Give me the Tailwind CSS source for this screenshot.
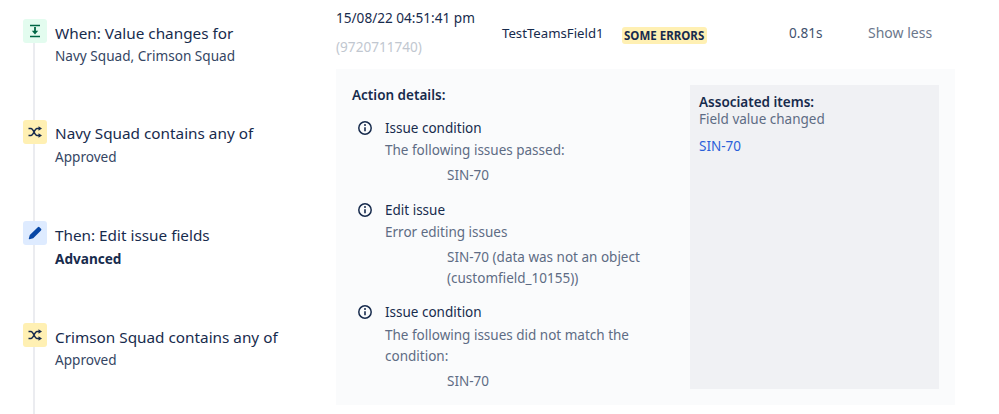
<!DOCTYPE html>
<html lang="en">
<head>
  <meta charset="UTF-8" />
  <title>Audit log</title>
  <script src="https://cdn.jsdelivr.net/npm/@tailwindcss/browser@4"></script>
</head>
<body class="bg-white h-[414px] overflow-hidden font-['Noto_Sans',sans-serif] text-[#172B4D]">
  <div class="flex h-[414px]">
    <!-- rule steps -->
    <div class="w-[336px] shrink-0 pl-[23px] pt-[19px] flex flex-col">
      <div class="flex h-[101px] gap-2">
        <div class="w-6 flex flex-col">
          <div class="w-6 h-6 rounded-[3px] bg-[#E3FCEF] flex items-center justify-center">
            <svg width="16" height="16" viewBox="0 0 16 16" fill="none"><path d="M3 2.5h10M3 13.5h10" stroke="#006644" stroke-width="1.7"/><path d="M8 4v5" stroke="#006644" stroke-width="1.8"/><path d="M4.8 7.8h6.4L8 11.6z" fill="#006644"/></svg>
          </div>
          <div class="ml-[10px] w-0.5 flex-1 bg-[#EBECF0]"></div>
        </div>
        <div class="pt-[2px]">
          <div class="text-[15.3px] leading-6">When: Value changes for</div>
          <div class="text-[13.6px] leading-[20px] mt-[1px] text-[#344563]">Navy Squad, Crimson Squad</div>
        </div>
      </div>
      <div class="flex h-[101px] gap-2">
        <div class="w-6 flex flex-col">
          <div class="w-6 h-6 rounded-[3px] bg-[#FFF0B3] flex items-center justify-center">
            <svg width="16" height="16" viewBox="0 0 16 16" fill="none" stroke="#172B4D" stroke-width="1.5"><path d="M1.5 4.5h2.5c2.5 0 3.5 7 6 7h3M1.5 11.5h2.5c2.5 0 3.5-7 6-7h3"/><path d="M11.5 2.3 15 4.5l-3.5 2.2zM11.5 9.3l3.5 2.2-3.5 2.2z" fill="#172B4D" stroke="none"/></svg>
          </div>
          <div class="ml-[10px] w-0.5 flex-1 bg-[#EBECF0]"></div>
        </div>
        <div class="pt-[1px]">
          <div class="text-[15.3px] leading-6">Navy Squad contains any of</div>
          <div class="text-[13.6px] leading-[20px] mt-[2px] text-[#344563]">Approved</div>
        </div>
      </div>
      <div class="flex h-[102px] gap-2">
        <div class="w-6 flex flex-col">
          <div class="w-6 h-6 rounded-[3px] bg-[#DEEBFF] flex items-center justify-center">
            <svg width="16" height="16" viewBox="0 0 16 16"><path d="M10.8 2.2a1.2 1.2 0 0 1 1.7 0l1.5 1.5a1.2 1.2 0 0 1 0 1.7L6.2 13.2 2.4 14.2a.5.5 0 0 1-.6-.6L2.8 10z" fill="#0747A6"/></svg>
          </div>
          <div class="ml-[10px] w-0.5 flex-1 bg-[#EBECF0]"></div>
        </div>
        <div class="pt-[2px]">
          <div class="text-[15.3px] leading-6">Then: Edit issue fields</div>
          <div class="text-[13.6px] leading-[20px] mt-[2px] font-bold">Advanced</div>
        </div>
      </div>
      <div class="flex flex-1 gap-2">
        <div class="w-6 flex flex-col">
          <div class="w-6 h-6 rounded-[3px] bg-[#FFF0B3] flex items-center justify-center">
            <svg width="16" height="16" viewBox="0 0 16 16" fill="none" stroke="#172B4D" stroke-width="1.5"><path d="M1.5 4.5h2.5c2.5 0 3.5 7 6 7h3M1.5 11.5h2.5c2.5 0 3.5-7 6-7h3"/><path d="M11.5 2.3 15 4.5l-3.5 2.2zM11.5 9.3l3.5 2.2-3.5 2.2z" fill="#172B4D" stroke="none"/></svg>
          </div>
          <div class="ml-[10px] w-0.5 flex-1 bg-[#EBECF0]"></div>
        </div>
        <div class="pt-[2px]">
          <div class="text-[15.3px] leading-6">Crimson Squad contains any of</div>
          <div class="text-[13.6px] leading-[20px] mt-[1px] text-[#344563]">Approved</div>
        </div>
      </div>
    </div>

    <!-- execution entry -->
    <div class="flex-1 min-w-0">
      <div class="h-[69px] flex text-[13.6px]">
        <div class="w-[166px] pt-[8px]">
          <div class="leading-5">15/08/22 04:51:41 pm</div>
          <div class="leading-5 mt-[9px] text-[#C1C7D0]">(9720711740)</div>
        </div>
        <div class="w-[120px] pt-[23px] leading-5 text-[13.2px]">TestTeamsField1</div>
        <div class="w-[167px] pt-[25px]">
          <span class="inline-block h-[17px] pl-[2px] pr-[3px] rounded-[3px] bg-[#FFF0B3] text-[11.5px] leading-[17px] font-bold whitespace-nowrap">SOME ERRORS</span>
        </div>
        <div class="w-[79px] pt-[23px] leading-5 text-[#42526E]">0.81s</div>
        <div class="pt-[23px] leading-5 text-[#6B778C] text-[14px]">Show less</div>
      </div>
      <div class="w-[619px] h-[336px] bg-[#FAFBFC] flex pl-[16px] pr-[16px] pt-[16px]">
        <div class="w-[338px] text-[13.5px] leading-5">
          <div class="font-semibold">Action details:</div>
          <div class="flex mt-[13px]">
            <div class="w-[33px] pl-[5px] pt-[2px] shrink-0">
              <svg width="16" height="16" viewBox="0 0 16 16" fill="none"><circle cx="8" cy="8" r="6.2" stroke="#172B4D" stroke-width="1.5"/><path d="M8 7.2v4" stroke="#172B4D" stroke-width="1.6"/><circle cx="8" cy="5" r="1" fill="#172B4D"/></svg>
            </div>
            <div>
              <div>Issue condition</div>
              <div class="mt-[2px] text-[#5E6C84]">The following issues passed:</div>
              <div class="mt-[5px] pl-[62px] text-[#5E6C84]">SIN-70</div>
            </div>
          </div>
          <div class="flex mt-[15px]">
            <div class="w-[33px] pl-[5px] pt-[2px] shrink-0">
              <svg width="16" height="16" viewBox="0 0 16 16" fill="none"><circle cx="8" cy="8" r="6.2" stroke="#172B4D" stroke-width="1.5"/><path d="M8 7.2v4" stroke="#172B4D" stroke-width="1.6"/><circle cx="8" cy="5" r="1" fill="#172B4D"/></svg>
            </div>
            <div>
              <div>Edit issue</div>
              <div class="mt-[2px] text-[#5E6C84]">Error editing issues</div>
              <div class="mt-[5px] pl-[62px] text-[#5E6C84] leading-[21px]">SIN-70 (data was not an object (customfield_10155))</div>
            </div>
          </div>
          <div class="flex mt-[13px]">
            <div class="w-[33px] pl-[5px] pt-[2px] shrink-0">
              <svg width="16" height="16" viewBox="0 0 16 16" fill="none"><circle cx="8" cy="8" r="6.2" stroke="#172B4D" stroke-width="1.5"/><path d="M8 7.2v4" stroke="#172B4D" stroke-width="1.6"/><circle cx="8" cy="5" r="1" fill="#172B4D"/></svg>
            </div>
            <div>
              <div>Issue condition</div>
              <div class="mt-[3px] text-[#5E6C84] leading-[21px]">The following issues did not match the condition:</div>
              <div class="mt-[4px] pl-[62px] text-[#5E6C84]">SIN-70</div>
            </div>
          </div>
        </div>
        <div class="w-[249px] h-[304px] bg-[#F0F1F4] p-[9px] text-[13.5px] leading-[17px]">
          <div class="font-semibold">Associated items:</div>
          <div class="text-[#5E6C84]">Field value changed</div>
          <div class="mt-[10px] text-[#2B5FD9]">SIN-70</div>
        </div>
      </div>
    </div>
  </div>
</body>
</html>
